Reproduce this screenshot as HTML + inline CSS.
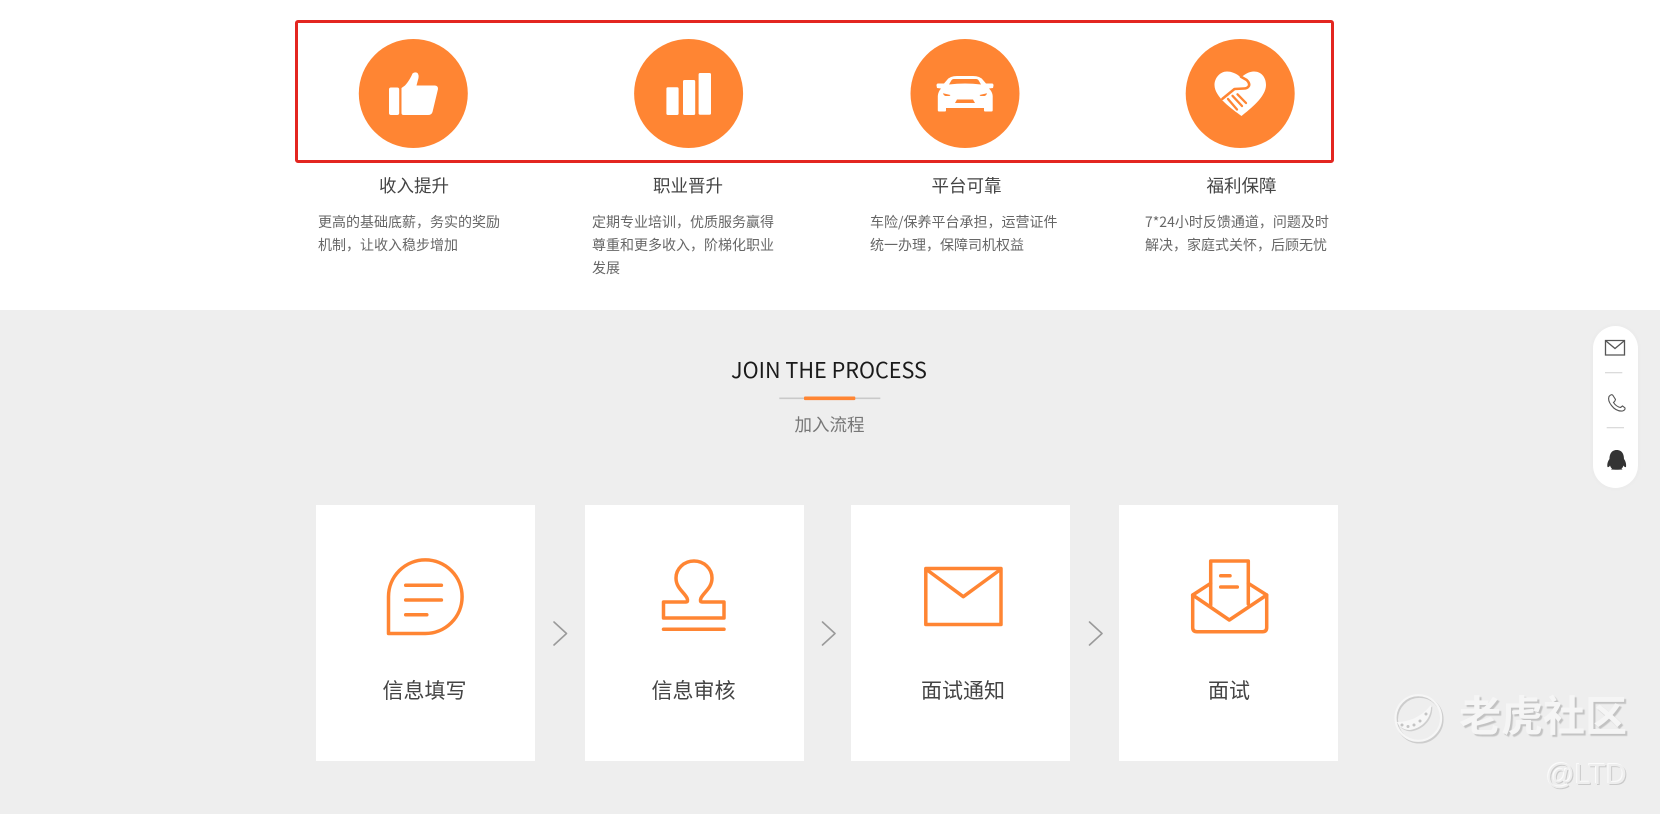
<!DOCTYPE html>
<html lang="zh">
<head>
<meta charset="utf-8">
<title>加入流程</title>
<style>
html,body{margin:0;padding:0;width:1660px;height:814px;overflow:hidden;background:#fff;font-family:"Liberation Sans","Noto Sans CJK SC",sans-serif}
#w{position:absolute;left:0;top:0;width:1660px;height:814px;overflow:hidden;filter:blur(.35px)}
.gray{position:absolute;left:0;top:310px;width:1660px;height:504px;background:#eeeeee}
.card{position:absolute;top:505px;height:256px;background:#fff}
.t{position:absolute;white-space:nowrap;font-family:"Noto Sans CJK SC","Liberation Sans",sans-serif}
.c{transform:translateX(-50%);text-align:center}
.title{top:173px;font-size:17.5px;line-height:26px;color:#444}
.desc{font-size:14px;line-height:23px;color:#666;top:211px}
.label{top:674px;font-size:21px;line-height:32px;color:#444}
.box{position:absolute;left:295px;top:20px;width:1033px;height:137px;border:3px solid #e32620;border-radius:3px}
.pill{position:absolute;left:1593px;top:326px;width:45px;height:162px;border-radius:23px;background:#fff;box-shadow:0 0 6px rgba(0,0,0,.03)}
svg{position:absolute;left:0;top:0}
</style>
</head>
<body>
<div id="w">
<div class="gray"></div>
<div class="card" style="left:316px;width:219px"></div>
<div class="card" style="left:585px;width:219px"></div>
<div class="card" style="left:851px;width:219px"></div>
<div class="card" style="left:1119px;width:219px"></div>
<div class="pill"></div>
<div class="box"></div>

<svg width="1660" height="814" viewBox="0 0 1660 814" fill="none">
  <!-- feature circles -->
  <circle cx="413.3" cy="93.5" r="54.5" fill="#ff8533"/>
  <circle cx="688.6" cy="93.5" r="54.5" fill="#ff8533"/>
  <circle cx="965" cy="93.5" r="54.5" fill="#ff8533"/>
  <circle cx="1240.2" cy="93.5" r="54.5" fill="#ff8533"/>
  <!-- thumb -->
  <rect x="389" y="87.5" width="10.2" height="27.5" rx="2" fill="#fff"/>
  <path d="M401.5 88L405 85.5C409 81 411 77 412.5 73.5Q415 71.5 417.5 73Q419 75 418.5 78L416.5 85.5L435 85.5Q438.3 86 438 89L432.5 112Q431.5 115 428 115L403.5 115Q401.5 115 401.5 113Z" fill="#fff"/>
  <!-- bars -->
  <rect x="666.4" y="87.3" width="12.2" height="27.7" rx="1.5" fill="#fff"/>
  <rect x="683" y="80" width="12.2" height="35" rx="1.5" fill="#fff"/>
  <rect x="698.6" y="73" width="12.4" height="41.7" rx="1.5" fill="#fff"/>
  <!-- car -->
  <path d="M957 76Q950 76 947 80L944 83.5L938 83.5Q936.5 83.5 936.5 85.5L937 88L941 88.5Q938 92 937.8 96L937.8 110.5Q937.8 111.5 939 111.5L945 111.5Q946 111.5 946 110.5L946 108L984 108L984 110.5Q984 111.5 985 111.5L991.5 111.5Q992.7 111.5 992.7 110.5L992.7 96Q992.5 92 989 88.5L993 88L993.5 85.5Q993.5 83.5 992 83.5L986 83.5L983 80Q980 76 973 76Z" fill="#fff"/>
  <path d="M954 79L976 79Q978 79 979 81L981 84.5Q965 82.5 949 84.5L951 81Q952 79 954 79Z" fill="#ff8533"/>
  <path d="M943 93.3L950.5 95L949.5 96L945.5 96Q943.5 95.5 943 93.3Z" fill="#ff8533"/>
  <path d="M987 93.3L979.5 95L980.5 96L984.5 96Q986.5 95.5 987 93.3Z" fill="#ff8533"/>
  <path d="M957 99.5L973 99.5L975 103L955 103Z" fill="#ff8533"/>
  <!-- heart -->
  <path d="M1241 77.5C1236 73 1231 71.5 1227 71.5C1220 71.5 1214.5 78 1214.5 85C1214.5 97 1232 109 1241.5 116C1250 109 1266 97 1266 85C1266 77 1261 71.5 1254 71.5C1249 71.5 1245 74 1241 77.5Z" fill="#fff"/>
  <path d="M1241 76.7L1246.7 80Q1250.5 84 1248.5 86.5Q1247 88.5 1244 88.5L1234.5 89L1222.5 98.8" stroke="#ff8533" stroke-width="2.6" stroke-linecap="round" stroke-linejoin="round"/>
  <path d="M1228 99L1237 109.5M1232.5 95.8L1242 106M1237.5 94.3L1246 103" stroke="#ff8533" stroke-width="2.3" stroke-linecap="round"/>

  <!-- process divider -->
  <rect x="779.3" y="397.5" width="101" height="1.6" fill="#c9c9c9"/>
  <rect x="804" y="396.5" width="51.3" height="3.6" rx="1" fill="#ff8533"/>

  <!-- process icons -->
  <g stroke="#ff8533" stroke-width="3.5" stroke-linejoin="round" stroke-linecap="round">
    <path d="M388.5 633.5L425 633.5A36.8 36.8 0 1 0 388.5 596.7Z"/>
    <path d="M405.7 585.3H441.4M405.7 600H441.4M405.7 614.7H426.8"/>
    <path d="M663.5 602L686 602Q688.5 602 687 598C684 592 676 588 676 578A18 17 0 0 1 712 578C712 588 704 592 701 598Q699.5 602 702 602L724 602L724 618L663.5 618Z"/>
    <path d="M663.5 629.3H724"/>
    <path d="M925.8 568.5H1001V624.5H925.8Z"/>
    <path d="M926.5 569.5L963.3 596.7L1000.5 569.5"/>
    <path d="M1210.7 605V561H1248.3V604"/>
    <path d="M1210.7 583.3L1192.7 595V627.5Q1192.7 631.7 1197 631.7H1262.5Q1266.7 631.7 1266.7 627.5V595L1248.3 583.3"/>
    <path d="M1192.7 595L1229.3 620L1266.7 595"/>
    <path d="M1220.7 575.7H1230M1220.7 587H1237.3"/>
  </g>

  <!-- chevrons -->
  <g stroke="#9a9a9a" stroke-width="1.6" stroke-linecap="round" stroke-linejoin="round">
    <path d="M554 622L566.5 633.5L554 645"/>
    <path d="M822.5 622L835 633.5L822.5 645"/>
    <path d="M1089.5 622L1102 633.5L1089.5 645"/>
  </g>

  <!-- side icons -->
  <path d="M1605.5 340.5H1624.5V355H1605.5Z" stroke="#555" stroke-width="1.3"/>
  <path d="M1606 341L1615 348.5L1624 341" stroke="#555" stroke-width="1.3"/>
  <path d="M1605 372.7H1622.3M1606.7 427.7H1624" stroke="#d6d6d6" stroke-width="1.2"/>
  <path d="M1609 396.5Q1611.5 393.5 1613 395.5L1615.5 399.5Q1615 401.5 1613.5 402.5Q1616 406.5 1620.5 407.5L1622.5 406L1625 408Q1625.5 410 1622.5 411Q1616 411.5 1611.5 405.5Q1607.5 400.5 1609 396.5Z" stroke="#555" stroke-width="1.1"/>
  <path d="M1616.7 450C1611 450 1609.5 455 1609.5 459C1608 461 1606.8 464 1607.5 467C1608.5 467.5 1609.5 466.5 1610 465.5C1610.5 467 1611 468 1612 468.5L1611 469.5L1615.5 469.8L1618 469.8L1622.5 469.5L1621.5 468.5C1622.5 468 1623 467 1623.5 465.5C1624 466.5 1625 467.5 1626 467C1626.5 464 1625.5 461 1624 459C1624 455 1622.5 450 1616.7 450Z" fill="#333"/>

  <!-- watermark logo -->
  <circle cx="1419.5" cy="719.4" r="22.8" stroke="#cdcdcd" stroke-width="2.6"/>
  <path transform="translate(1.2 1.4)" d="M1431 705C1432 716 1424 728 1410 730C1404 730 1399 727 1397 722C1404 722 1413 720 1420 715C1425 712 1428 708 1431 705Z" fill="#cfcfcf"/>
  <circle cx="1418.3" cy="718" r="22.8" stroke="#f6f6f6" stroke-width="2.2"/>
  <path d="M1431 705C1432 716 1424 728 1410 730C1404 730 1399 727 1397 722C1404 722 1413 720 1420 715C1425 712 1428 708 1431 705Z" fill="#f7f7f7"/>
  <g fill="#c4c4c4">
    <circle cx="1402" cy="725" r="1.5"/><circle cx="1408" cy="726.5" r="1.5"/><circle cx="1414" cy="725" r="1.5"/><circle cx="1420" cy="721" r="1.5"/><circle cx="1426" cy="714" r="1.5"/>
  </g>
</svg>

<div class="t c title" style="left:414px">收入提升</div>
<div class="t c title" style="left:688px">职业晋升</div>
<div class="t c title" style="left:966.5px">平台可靠</div>
<div class="t c title" style="left:1241.5px">福利保障</div>

<div class="t desc" style="left:318px">更高的基础底薪，务实的奖励<br>机制，让收入稳步增加</div>
<div class="t desc" style="left:592px">定期专业培训，优质服务赢得<br>尊重和更多收入，阶梯化职业<br>发展</div>
<div class="t desc" style="left:870px">车险/保养平台承担，运营证件<br>统一办理，保障司机权益</div>
<div class="t desc" style="left:1145px">7*24小时反馈通道，问题及时<br>解决，家庭式关怀，后顾无忧</div>

<div class="t c" style="left:829px;top:354px;font-size:21.6px;line-height:32px;color:#1a1a1a">JOIN THE PROCESS</div>
<div class="t c" style="left:829.5px;top:412px;font-size:17.5px;line-height:26px;color:#777">加入流程</div>

<div class="t c label" style="left:424.5px">信息填写</div>
<div class="t c label" style="left:693.5px">信息审核</div>
<div class="t c label" style="left:963px">面试通知</div>
<div class="t c label" style="left:1229px">面试</div>

<div class="t" style="left:1459px;top:684px;font-size:42px;line-height:60px;font-weight:700;color:#f5f5f5;text-shadow:2px 2px 1px #c2c2c2">老虎社区</div>
<div class="t" style="left:1546px;top:758px;font-family:'Liberation Sans',sans-serif;font-size:28.5px;line-height:34px;color:#eeeeee;text-shadow:-1px -1px 0 #fbfbfb,1px 1px 0 #cacaca">@LTD</div>
</div>
</body>
</html>
